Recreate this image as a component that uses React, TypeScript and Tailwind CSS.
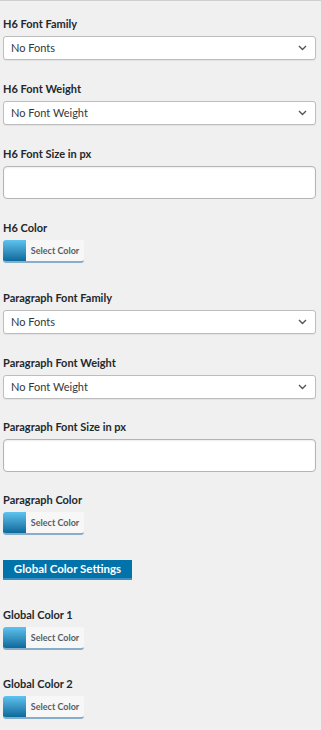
import React from "react";

const font = { fontFamily: "Lato, 'Open Sans', sans-serif" };

function Label({ text }: { text: string }) {
  return <div className="h-[18px] text-[11px] leading-[18px] font-bold text-[#23282d] mb-[3px]">{text}</div>;
}

function SelectBox({ value }: { value: string }) {
  return (
    <div className="flex h-[24px] w-[313px] items-center justify-between rounded-[3px] border border-[#bdbdbd] bg-white pl-[7px] pr-[8px] shadow-[0_1px_1px_rgba(0,0,0,0.06)]">
      <span className="text-[11px] text-[#32373c]">{value}</span>
      <svg width="9" height="6" viewBox="0 0 9 6" fill="none" stroke="#555" strokeWidth="1.4">
        <polyline points="1 1 4.5 4.5 8 1" />
      </svg>
    </div>
  );
}

function TextBox() {
  return <div className="h-[33px] w-[313px] rounded-[4px] border border-[#b4b4b4] bg-white shadow-[inset_0_1px_2px_rgba(0,0,0,0.07)]" />;
}

function ColorButton() {
  return (
    <div className="flex h-[23px] w-[81px] overflow-hidden rounded-[3px] border-b-2 border-[#86aecb] bg-[#f7f7f7]">
      <div className="w-[23px] bg-gradient-to-b from-[#5ec3ef] to-[#0a6a9b]" />
      <div className="flex flex-1 items-center justify-center text-[9px] font-bold text-[#555d66]">Select Color</div>
    </div>
  );
}

function Field({ label, mt, children }: { label: string; mt: string; children: React.ReactNode }) {
  return (
    <div className={mt}>
      <Label text={label} />
      {children}
    </div>
  );
}

export default function App() {
  return (
    <div className="min-h-[730px] w-[321px] border-t border-[#cfcfcf] bg-[#f0f0f0] pl-[3px]" style={font}>
      <Field label="H6 Font Family" mt="mt-[14px]"><SelectBox value="No Fonts" /></Field>
      <Field label="H6 Font Weight" mt="mt-[20px]"><SelectBox value="No Font Weight" /></Field>
      <Field label="H6 Font Size in px" mt="mt-[20px]"><TextBox /></Field>
      <Field label="H6 Color" mt="mt-[20px]"><ColorButton /></Field>
      <Field label="Paragraph Font Family" mt="mt-[26px]"><SelectBox value="No Fonts" /></Field>
      <Field label="Paragraph Font Weight" mt="mt-[20px]"><SelectBox value="No Font Weight" /></Field>
      <Field label="Paragraph Font Size in px" mt="mt-[19px]"><TextBox /></Field>
      <Field label="Paragraph Color" mt="mt-[19px]"><ColorButton /></Field>
      <div className="mt-[25px] flex h-[20px] w-[129px] items-center justify-center border-b-2 border-[#3d8fbf] bg-[#0073aa] text-[11.5px] font-bold text-white">
        Global Color Settings
      </div>
      <Field label="Global Color 1" mt="mt-[26px]"><ColorButton /></Field>
      <Field label="Global Color 2" mt="mt-[25px]"><ColorButton /></Field>
    </div>
  );
}
